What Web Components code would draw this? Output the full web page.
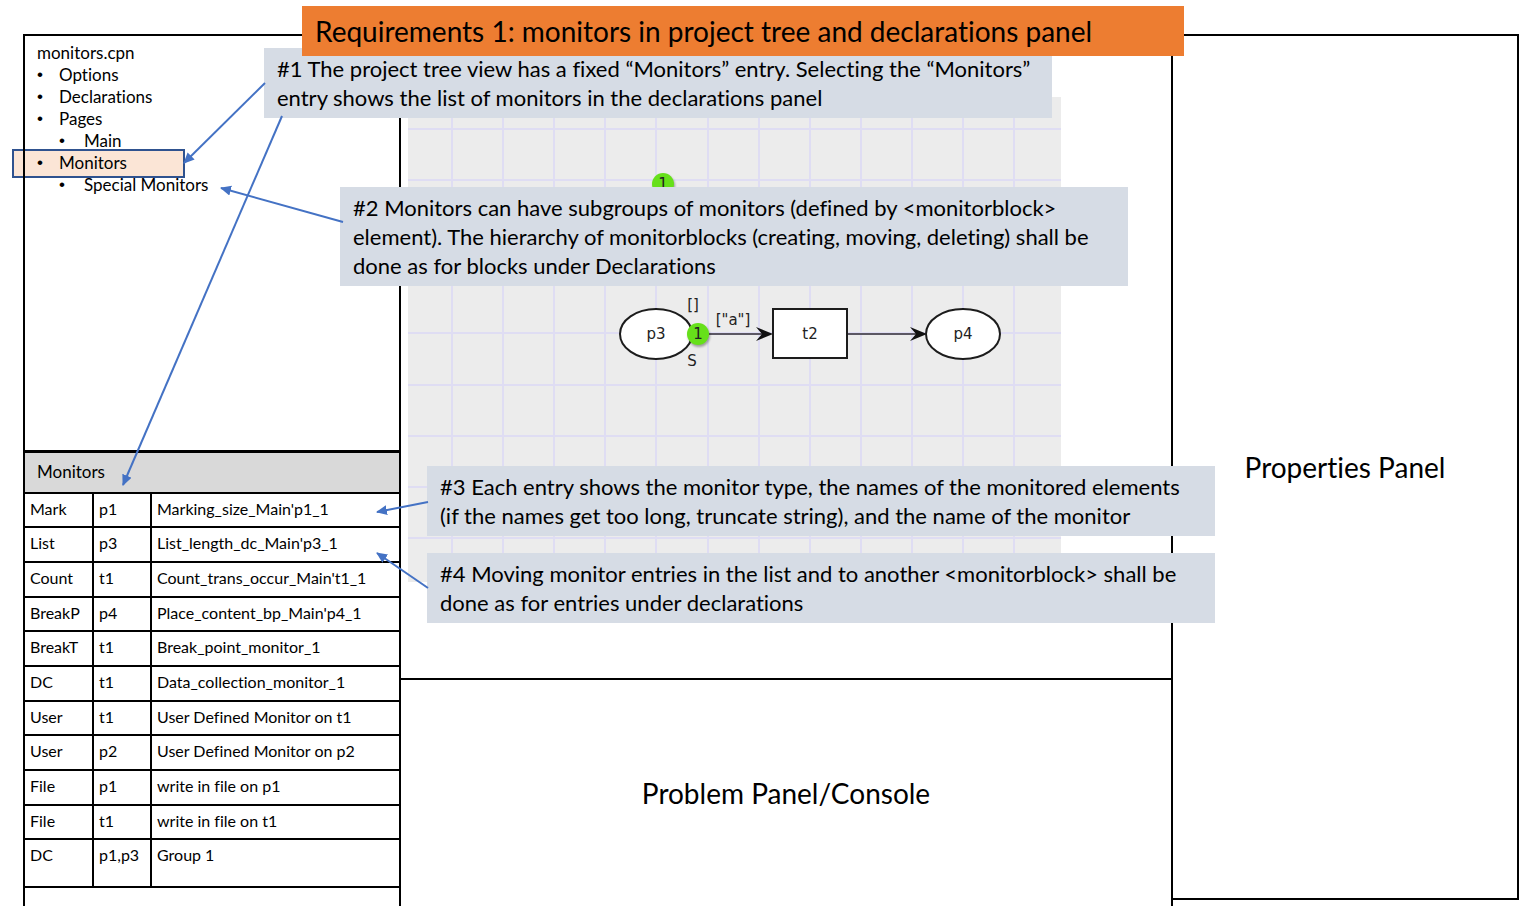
<!DOCTYPE html>
<html lang="en">
<head>
<meta charset="utf-8">
<title>Requirements 1: monitors in project tree and declarations panel</title>
<style>
  html, body { margin: 0; background: #fff; }
  body { font-family: Lato, Carlito, Calibri, sans-serif; font-variant-ligatures: none; color: #000; }
</style>
</head>
<body>
<requirements-slide></requirements-slide>

<template id="slide-template">
  <style>
    :host {
      display: grid;
      grid-template-columns: 376px minmax(660px, 772fr) minmax(240px, 348fr);
      box-sizing: border-box;
      min-height: 100vh;
      padding: 34px 14px 0 23px;
      position: relative;
      isolation: isolate;
      overflow: hidden;
    }
    .left, .middle, .right { display: flex; flex-direction: column; border-left: 2px solid #000; }
    .left, .middle { border-top: 2px solid #000; }
    project-tree { min-height: 414px; box-sizing: border-box; }
    .console { flex: 1; border-top: 2px solid #000; }
    .properties { flex: 1; margin-bottom: 6px; border: 2px solid #000; border-left: 0; }
    slide-title, note-box, note-arrows { position: absolute; }
    slide-title { left: 302px; top: 6px; width: 882px; }
    note-box { width: 788px; }
    .n1 { left: 264px; top: 48px; }
    .n2 { left: 340px; top: 187px; }
    .n3 { left: 427px; top: 466px; }
    .n4 { left: 427px; top: 553px; }
    note-arrows { left: 0; top: 0; }
  </style>
  <section class="left">
    <project-tree></project-tree>
    <monitor-list></monitor-list>
  </section>
  <section class="middle">
    <net-canvas></net-canvas>
    <area-panel class="console">Problem Panel/Console</area-panel>
  </section>
  <section class="right">
    <area-panel class="properties">Properties Panel</area-panel>
  </section>
  <note-box class="n1">#1 The project tree view has a fixed “Monitors” entry. Selecting the “Monitors”<br>entry shows the list of monitors in the declarations panel</note-box>
  <note-box class="n2">#2 Monitors can have subgroups of monitors (defined by &lt;monitorblock&gt;<br>element). The hierarchy of monitorblocks (creating, moving, deleting) shall be<br>done as for blocks under Declarations</note-box>
  <note-box class="n3">#3 Each entry shows the monitor type, the names of the monitored elements<br>(if the names get too long, truncate string), and the name of the monitor</note-box>
  <note-box class="n4">#4 Moving monitor entries in the list and to another &lt;monitorblock&gt; shall be<br>done as for entries under declarations</note-box>
  <note-arrows></note-arrows>
  <slide-title>Requirements 1: monitors in project tree and declarations panel</slide-title>
</template>

<template id="title-template">
  <style>
    :host { display: block; box-sizing: border-box; padding: 8px 13px; background: #ed7d31; }
    h1 { margin: 0; font-size: 28px; font-weight: 400; line-height: 34px; white-space: nowrap; }
  </style>
  <h1><slot></slot></h1>
</template>

<template id="note-template">
  <style>
    :host {
      display: block; box-sizing: border-box; padding: 6px 13px;
      background: #d6dce5; font-size: 22px; line-height: 29px; white-space: nowrap;
    }
  </style>
  <slot></slot>
</template>

<template id="panel-template">
  <style>
    :host { display: flex; align-items: center; justify-content: center; font-size: 28px; line-height: 34px; }
  </style>
  <span><slot></slot></span>
</template>

<template id="tree-template">
  <style>
    :host { display: block; padding: 6px 12px; font-size: 17px; line-height: 22px; }
    ul { margin: 0; padding: 0; list-style: none; }
    li { position: relative; padding-left: 22px; }
    ul ul li { padding-left: 25px; }
    li::before { content: "•"; position: absolute; left: 0; font-family: "Liberation Sans", sans-serif; }
    .selected::after {
      content: ""; position: absolute; z-index: -1; box-sizing: border-box;
      left: -25px; top: -3px; width: 173px; height: 29px;
      border: 2px solid #2f528f; background: #fbe5d6;
    }
  </style>
  <div>monitors.cpn</div>
  <ul>
    <li>Options</li>
    <li>Declarations</li>
    <li>Pages<ul><li>Main</li></ul></li>
    <li class="selected">Monitors<ul><li>Special Monitors</li></ul></li>
  </ul>
</template>

<template id="list-template">
  <style>
    :host { display: block; border-top: 3px solid #000; }
    h2 {
      margin: 0; padding: 8px 12px 9px; border-bottom: 2px solid #000; background: #d9d9d9;
      font-size: 17px; font-weight: 400; line-height: 22px;
    }
    table { width: 100%; table-layout: fixed; border-collapse: separate; border-spacing: 0; font-size: 16px; line-height: 20px; }
    .type { width: 69px; }
    .element { width: 58px; }
    td {
      box-sizing: border-box; height: 35px; padding: 5px 5px 0; vertical-align: top;
      border-bottom: 2px solid #000; white-space: nowrap; overflow: hidden; text-overflow: ellipsis;
    }
    td:not(:last-child) { border-right: 2px solid #000; }
    tr:nth-child(3n + 1) td { height: 34px; }
    tr:last-child td { height: 48px; }
  </style>
  <h2 id="heading">Monitors</h2>
  <table aria-labelledby="heading">
    <colgroup><col class="type"><col class="element"><col></colgroup>
    <tbody></tbody>
  </table>
</template>

<template id="net-template">
  <style>
    :host { display: block; padding: 61px 7px 96px; }
    svg { display: block; background: #ececec; }
    text { font-family: "DejaVu Sans", sans-serif; font-size: 15px; fill: #222; text-anchor: middle; }
    .grid { stroke: #dfddf3; stroke-width: 2; }
    .node { fill: #fff; stroke: #1c1c1c; stroke-width: 2; }
    .arc { stroke: #5b5763; stroke-width: 2; }
    .head { fill: #111; }
    .token { fill: #66e01a; filter: drop-shadow(1px 2px 1px #0005); }
  </style>
  <svg width="653" height="485" viewBox="408 97 653 485" role="img" aria-label="Petri net">
    <g class="grid"></g>
    <circle class="token" cx="663" cy="184" r="11"/>
    <text x="663" y="189">1</text>
    <path class="arc" d="M700 334H768M847 334H922"/>
    <path class="head" d="M773 334L756 341L762 334L756 327ZM927 334L910 341L916 334L910 327Z"/>
    <ellipse class="node" cx="656" cy="334" rx="36" ry="25"/>
    <rect class="node" x="773" y="309" width="74" height="49"/>
    <ellipse class="node" cx="963" cy="334" rx="37" ry="25"/>
    <circle class="token" cx="698" cy="334" r="11"/>
    <text x="656" y="339">p3</text>
    <text x="698" y="339">1</text>
    <text x="693" y="310">[]</text>
    <text x="692" y="366">S</text>
    <text x="733" y="325">["a"]</text>
    <text x="810" y="339">t2</text>
    <text x="963" y="339">p4</text>
  </svg>
</template>

<template id="arrows-template">
  <style>
    :host { display: block; pointer-events: none; }
    svg { display: block; overflow: visible; }
    line { stroke: #4472c4; stroke-width: 2; marker-end: url(#tip); }
  </style>
  <svg width="430" height="600" viewBox="0 0 430 600" aria-hidden="true">
    <defs>
      <marker id="tip" markerUnits="userSpaceOnUse" markerWidth="12" markerHeight="12" refX="10" refY="5" orient="auto">
        <path d="M0 0L11 5L0 10Z" fill="#4472c4"/>
      </marker>
    </defs>
    <line x1="265" y1="83" x2="184" y2="163"/>
    <line x1="282" y1="116" x2="123" y2="485"/>
    <line x1="343" y1="222" x2="221" y2="188"/>
    <line x1="428" y1="502" x2="377" y2="512"/>
    <line x1="428" y1="588" x2="377" y2="553"/>
  </svg>
</template>

<script>
  class TemplateElement extends HTMLElement {
    constructor() {
      super();
      const template = document.getElementById(this.constructor.templateId);
      this.attachShadow({ mode: "open" }).append(template.content.cloneNode(true));
    }
  }

  class SlideTitle extends TemplateElement { static templateId = "title-template"; }
  class NoteBox extends TemplateElement { static templateId = "note-template"; }
  class AreaPanel extends TemplateElement { static templateId = "panel-template"; }
  class ProjectTree extends TemplateElement { static templateId = "tree-template"; }
  class NoteArrows extends TemplateElement { static templateId = "arrows-template"; }
  class RequirementsSlide extends TemplateElement { static templateId = "slide-template"; }

  class MonitorList extends TemplateElement {
    static templateId = "list-template";
    static monitors = [
      ["Mark", "p1", "Marking_size_Main'p1_1"],
      ["List", "p3", "List_length_dc_Main'p3_1"],
      ["Count", "t1", "Count_trans_occur_Main't1_1"],
      ["BreakP", "p4", "Place_content_bp_Main'p4_1"],
      ["BreakT", "t1", "Break_point_monitor_1"],
      ["DC", "t1", "Data_collection_monitor_1"],
      ["User", "t1", "User Defined Monitor on t1"],
      ["User", "p2", "User Defined Monitor on p2"],
      ["File", "p1", "write in file on p1"],
      ["File", "t1", "write in file on t1"],
      ["DC", "p1,p3", "Group 1"],
    ];
    constructor() {
      super();
      const body = this.shadowRoot.querySelector("tbody");
      for (const monitor of MonitorList.monitors) {
        const row = body.insertRow();
        for (const value of monitor) row.insertCell().textContent = value;
      }
    }
  }

  class NetCanvas extends TemplateElement {
    static templateId = "net-template";
    constructor() {
      super();
      const path = document.createElementNS("http://www.w3.org/2000/svg", "path");
      let d = "";
      for (let i = 0; i < 12; i++) d += `M${Math.round(452 + i * 51.1)} 97V582`;
      for (let i = 0; i < 9; i++) d += `M408 ${Math.round(129 + i * 51.1)}H1061`;
      path.setAttribute("d", d);
      this.shadowRoot.querySelector(".grid").append(path);
    }
  }

  customElements.define("slide-title", SlideTitle);
  customElements.define("note-box", NoteBox);
  customElements.define("area-panel", AreaPanel);
  customElements.define("project-tree", ProjectTree);
  customElements.define("monitor-list", MonitorList);
  customElements.define("net-canvas", NetCanvas);
  customElements.define("note-arrows", NoteArrows);
  customElements.define("requirements-slide", RequirementsSlide);
</script>
</body>
</html>
